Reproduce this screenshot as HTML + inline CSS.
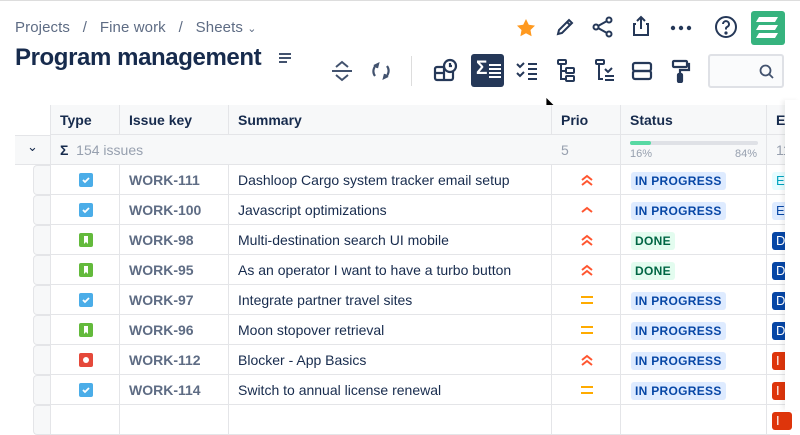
<!DOCTYPE html>
<html><head><meta charset="utf-8"><style>
*{box-sizing:border-box;margin:0;padding:0}
body{width:800px;height:410px;overflow:hidden;background:#fff;font-family:"Liberation Sans",sans-serif;position:relative;color:#172b4d}
.topline{position:absolute;left:0;top:0;width:800px;height:1px;background:#ddd}
.bc{position:absolute;left:15px;top:19px;font-size:15px;color:#5e6c84;letter-spacing:.1px}
.title{position:absolute;left:15px;top:44px;font-size:24px;font-weight:bold;color:#172b4d;letter-spacing:-.4px}
.ic{position:absolute}
svg{display:block}
.tbl{position:absolute;left:50px;top:105px;width:740px}
.row{position:absolute;left:0;height:30px;width:740px;border-bottom:1px solid #e4e5e8;font-size:14px}
.c{position:absolute;top:0;height:30px;line-height:30px;border-right:1px solid #e4e5e8;overflow:hidden;white-space:nowrap}
.hd{background:#f7f8f9;font-weight:bold;font-size:14px;color:#172b4d}
.key{color:#5e6c84;font-weight:bold;padding-left:9px}
.sum{padding-left:9px;color:#172b4d}
.lz{display:inline-block;font-size:12px;font-weight:bold;height:18px;line-height:18px;padding:0 4px;border-radius:3px;vertical-align:middle;margin-left:10px;letter-spacing:.3px}
.ip{background:#deebff;color:#0747a6}
.dn{background:#e3fcef;color:#006644}
.ti{position:absolute;left:28px;top:8px;width:14px;height:14px;border-radius:2px;line-height:0}
.ep{position:absolute;left:5px;top:7px;width:20px;height:18px;border-radius:3px}
.gut{position:absolute;left:33px;width:17px;height:30px;border:1px solid #e4e5e8;border-right:none;border-radius:4px 0 0 4px;background:#f7f8f9}
</style></head><body>
<div class="topline"></div>
<div class="bc">Projects&nbsp;&nbsp;&nbsp;/&nbsp;&nbsp;&nbsp;Fine work&nbsp;&nbsp;&nbsp;/&nbsp;&nbsp;&nbsp;Sheets <span style="font-size:11px">&#8964;</span></div>
<div class="title">Program management</div>
<svg class="ic" style="left:278px;top:52px" width="14" height="12"><g stroke="#42526e" stroke-width="2"><path d="M1 2h12M1 6h12M1 10h8"/></g></svg>
<svg class="ic" style="left:330px;top:60px" width="24" height="22" fill="none" stroke="#42526e" stroke-width="2"><path d="M6 7l6-5 6 5M2 11h20M6 15l6 5 6-5"/></svg>
<svg class="ic" style="left:370px;top:60px" width="22" height="22" fill="none" stroke="#42526e" stroke-width="2.2"><path d="M8 4a8 8 0 0 0-3 12M4 6l4-2-1 4M14 18a8 8 0 0 0 3-12M18 16l-4 2 1-4"/></svg>
<div style="position:absolute;left:411px;top:56px;width:1px;height:30px;background:#ddd"></div>
<svg class="ic" style="left:433px;top:58px" width="26" height="26" fill="none" stroke="#253858" stroke-width="2.2"><rect x="2" y="9" width="18" height="13" rx="2"/><path d="M11 9v13M2 15h9"/><circle cx="17" cy="8" r="6" fill="#fff"/><path d="M17 5v3h2"/></svg>
<div style="position:absolute;left:471px;top:54px;width:33px;height:33px;background:#253858;border-radius:3px"></div>
<div style="position:absolute;left:476px;top:58px;color:#fff;font-weight:bold;font-size:19px">Σ</div>
<svg class="ic" style="left:489px;top:63px" width="12" height="16" stroke="#fff" stroke-width="2"><path d="M0 2h12M0 6h12M0 10h12M0 14h12"/></svg>
<svg class="ic" style="left:515px;top:61px" width="24" height="20" fill="none" stroke="#253858" stroke-width="2"><path d="M2 3l3 3 4-4M2 12l3 3 4-4M13 3h9M13 8h9M13 13h9M13 18h9"/></svg>
<svg class="ic" style="left:556px;top:59px" width="20" height="24" fill="none" stroke="#253858" stroke-width="2"><rect x="2" y="1" width="8" height="4" rx="1"/><path d="M5 5v15h4M5 12h4"/><rect x="10" y="9" width="8" height="5" rx="1"/><rect x="10" y="17" width="8" height="5" rx="1"/></svg>
<svg class="ic" style="left:594px;top:59px" width="22" height="24" fill="none" stroke="#253858" stroke-width="2"><rect x="2" y="1" width="8" height="4" rx="1"/><path d="M5 5v15h4M11 10l3 3 4-4M11 17h9M11 21h9"/></svg>
<svg class="ic" style="left:631px;top:61px" width="22" height="20" fill="none" stroke="#253858" stroke-width="2.2"><rect x="2" y="2" width="18" height="8" rx="2"/><rect x="2" y="10" width="18" height="8" rx="2"/></svg>
<svg class="ic" style="left:671px;top:59px" width="20" height="24" fill="none" stroke="#253858" stroke-width="2.2"><rect x="2" y="2" width="14" height="6" rx="1"/><path d="M16 5h2v6H9v4"/><rect x="7" y="15" width="4" height="8" rx="1" fill="#253858"/></svg>
<div style="position:absolute;left:708px;top:54px;width:76px;height:34px;border:2px solid #dfe1e6;border-radius:3px;background:#fafbfc"></div>
<svg class="ic" style="left:759px;top:64px" width="16" height="16" fill="none" stroke="#42526e" stroke-width="1.8"><circle cx="6.5" cy="6.5" r="5"/><path d="M10 10l4 4"/></svg>
<svg class="ic" style="left:516px;top:18px" width="20" height="19"><path d="M10 1l2.8 5.8 6.2.8-4.5 4.4 1.1 6.2L10 15.2 4.4 18.2l1.1-6.2L1 7.6l6.2-.8z" fill="#ff991f"/></svg>
<svg class="ic" style="left:555px;top:17px" width="20" height="20" fill="none" stroke="#253858" stroke-width="2"><path d="M3 17l1-4L14 3l3 3L7 16z M12 5l3 3"/></svg>
<svg class="ic" style="left:592px;top:16px" width="22" height="22" fill="none" stroke="#253858" stroke-width="2"><circle cx="17" cy="4" r="2.5"/><circle cx="4" cy="11" r="2.5"/><circle cx="17" cy="18" r="2.5"/><path d="M6 10l9-5M6 12l9 5"/></svg>
<svg class="ic" style="left:632px;top:15px" width="18" height="22" fill="none" stroke="#253858" stroke-width="2"><path d="M9 14V2M5 6l4-4 4 4M4 9H2v11h14V9h-2"/></svg>
<svg class="ic" style="left:670px;top:25px" width="22" height="6" fill="#253858"><circle cx="3" cy="3" r="2.2"/><circle cx="11" cy="3" r="2.2"/><circle cx="19" cy="3" r="2.2"/></svg>
<svg class="ic" style="left:714px;top:15px" width="24" height="24" fill="none" stroke="#253858" stroke-width="2"><circle cx="12" cy="12" r="10"/><path d="M9 9a3 3 0 1 1 4 3c-1 .5-1 1-1 2.5"/><circle cx="12" cy="18" r=".6" fill="#253858"/></svg>
<div style="position:absolute;left:751px;top:11px;width:34px;height:34px;background:#36b37e;border-radius:3px"></div>
<svg class="ic" style="left:755px;top:16px" width="26" height="24" fill="#fff"><path d="M4 1h19l-3 5H1zM4 9h19l-3 5H1zM4 17h19l-3 5H1z"/></svg>
<svg class="ic" style="left:545px;top:96px" width="12" height="18"><path d="M1 1v13l3-3 3 6 2-1-3-6h4z" fill="#000" stroke="#fff" stroke-width=".8"/></svg>

<div style="position:absolute;left:50px;top:105px;width:740px;height:1px;background:#e4e5e8"></div>
<div style="position:absolute;left:15px;top:135px;width:35px;height:30px;background:#f7f8f9;border-bottom:1px solid #e4e5e8;border-top:1px solid #e4e5e8"></div>
<div style="position:absolute;left:27px;top:139px;font-size:13px;color:#172b4d">&#8964;</div>

<div class="tbl">
<div class="row hd" style="top:0;height:30px;border-left:1px solid #e4e5e8">
<div class="c" style="left:0;width:69px;padding-left:9px">Type</div>
<div class="c" style="left:69px;width:109px;padding-left:9px">Issue key</div>
<div class="c" style="left:178px;width:323px;padding-left:9px">Summary</div>
<div class="c" style="left:501px;width:69px;padding-left:9px">Prio</div>
<div class="c" style="left:570px;width:146px;padding-left:9px">Status</div>
<div class="c" style="left:716px;width:30px;padding-left:9px;border:none">E</div>
</div>
<div class="row" style="top:30px;background:#f7f8f9;color:#97a0af;border-left:1px solid #e4e5e8">
<div class="c" style="left:0;width:501px;padding-left:9px;border-right:none"><b style="color:#172b4d">Σ</b>&nbsp; 154 issues</div>
<div class="c" style="left:501px;width:69px;padding-left:9px">5</div>
<div class="c" style="left:570px;width:146px">
<div style="position:absolute;left:9px;top:6px;width:128px;height:4px;background:#dfe1e6;border-radius:2px"><div style="width:21px;height:4px;background:#57d9a3;border-radius:2px"></div></div>
<div style="position:absolute;left:9px;top:12px;font-size:11px;line-height:14px">16%</div>
<div style="position:absolute;right:9px;top:12px;font-size:11px;line-height:14px">84%</div></div>
<div class="c" style="left:716px;width:30px;padding-left:9px;border:none">11</div>
</div>
</div>

<div id="rows"></div>
<script>
var R=[["t","WORK-111","Dashloop Cargo system tracker email setup","h","ip","lb"],
["t","WORK-100","Javascript optimizations","m","ip","lb"],
["s","WORK-98","Multi-destination search UI mobile","h","dn","db"],
["s","WORK-95","As an operator I want to have a turbo button","h","dn","db"],
["t","WORK-97","Integrate partner travel sites","e","ip","db"],
["s","WORK-96","Moon stopover retrieval","e","ip","db"],
["b","WORK-112","Blocker - App Basics","h","ip","rd"],
["t","WORK-114","Switch to annual license renewal","e","ip","rd"],
["t","","","e","","rd"]];
var h="";
R.forEach(function(r,i){var top=165+i*30;
h+='<div class="gut" style="top:'+top+'px"></div>';
h+='<div class="row" style="left:50px;top:'+top+'px;border-left:1px solid #e4e5e8">';
var ti=r[0]=="t"?'<div class="ti" style="background:#4bade8"><svg width="14" height="14"><path d="M4 7l2 2 4-4" stroke="#fff" stroke-width="1.8" fill="none"/></svg></div>':
 r[0]=="s"?'<div class="ti" style="background:#63ba3c"><svg width="14" height="14"><path d="M5 3h4v8l-2-2-2 2z" fill="#fff"/></svg></div>':
 '<div class="ti" style="background:#e5493a"><svg width="14" height="14"><circle cx="7" cy="7" r="3" fill="#fff"/></svg></div>';
if(!r[1])ti="";
h+='<div class="c" style="left:0;width:69px">'+ti+'</div>';
h+='<div class="c key" style="left:69px;width:109px">'+r[1]+'</div>';
h+='<div class="c sum" style="left:178px;width:323px">'+r[2]+'</div>';
var p=r[3]=="h"?'<svg style="position:absolute;left:28px;top:9px" width="14" height="12" fill="none" stroke="#ff5630" stroke-width="2"><path d="M2 6l5-4 5 4M2 11l5-4 5 4"/></svg>':
 r[3]=="m"?'<svg style="position:absolute;left:28px;top:10px" width="14" height="10" fill="none" stroke="#ff5630" stroke-width="2"><path d="M2 7l5-4 5 4"/></svg>':
 '<svg style="position:absolute;left:28px;top:10px" width="14" height="10" stroke="#ffab00" stroke-width="2"><path d="M1 2h12M1 8h12"/></svg>';
if(!r[1])p="";
h+='<div class="c" style="left:501px;width:69px">'+p+'</div>';
var s=r[4]=="ip"?'<span class="lz ip">IN PROGRESS</span>':r[4]=="dn"?'<span class="lz dn">DONE</span>':"";
h+='<div class="c" style="left:570px;width:146px">'+s+'</div>';
var ec=r[5]=="lb"?(i==0?"#e6fcff":"#deebff"):r[5]=="db"?"#0747a6":"#de350b";
var et=r[5]=="lb"?(i==0?"#00a3bf":"#0747a6"):"#fff";
h+='<div class="c" style="left:716px;width:30px;border:none"><div class="ep" style="background:'+ec+';color:'+et+';font-size:13px;line-height:18px;padding-left:4px">'+(r[5]=="lb"?"E":r[5]=="db"?"D":"I")+'</div></div>';
h+='</div>';});
document.getElementById("rows").innerHTML=h;
</script>
<div style="position:absolute;left:785px;top:100px;width:15px;height:310px;background:#fff;box-shadow:-3px 0 4px rgba(0,0,0,.06)"></div>
</body></html>
